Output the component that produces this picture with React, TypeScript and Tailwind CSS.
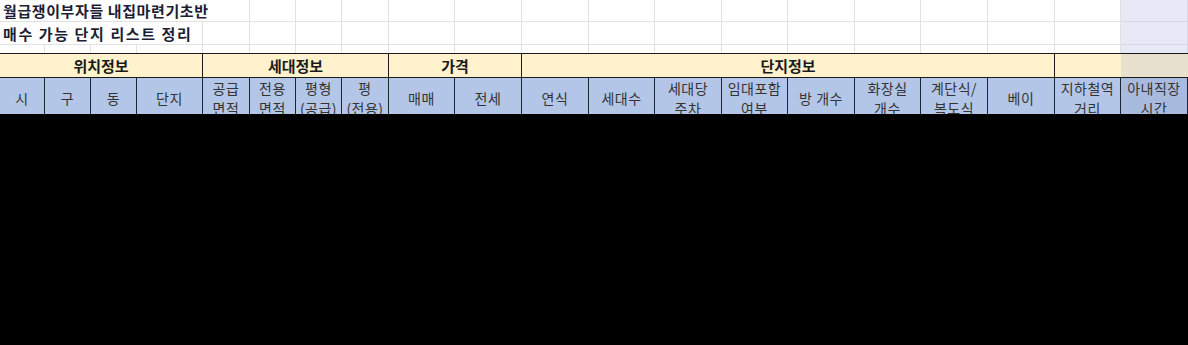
const cols = 'grid-cols-[45px_46px_46px_66px_47px_46px_46px_47px_66px_67px_67px_66px_67px_66px_67px_66px_67px_67px_66px_67px]'

const headers: string[][] = [
  ['시'], ['구'], ['동'], ['단지'],
  ['공급', '면적'], ['전용', '면적'], ['평형', '(공급)'], ['평', '(전용)'],
  ['매매'], ['전세'],
  ['연식'], ['세대수'], ['세대당', '주차'], ['임대포함', '여부'], ['방 개수'], ['화장실', '개수'], ['계단식/', '복도식'], ['베이'],
  ['지하철역', '거리'], ['아내직장', '시간'],
]

function GridRow({ h, skip = 0 }: { h: string; skip?: number }) {
  const cells = []
  for (let i = skip; i < 20; i++) {
    const last = i === 19
    cells.push(
      <div
        key={i}
        className={`${h} border-r border-b ${last ? 'bg-[#e7eaf6] border-[#d3d7e6]' : 'bg-white border-[#e1e1e1]'}`}
      />
    )
  }
  return <>{cells}</>
}

export default function App() {
  return (
    <div className="w-[1188px] h-[345px] bg-black font-['Noto_Sans_CJK_KR','Noto_Sans',sans-serif] text-[#1b1b1b]">
      <div className="h-[114px] overflow-hidden bg-white">
        <div className={`grid ${cols}`}>
          {/* row 1 - title */}
          <div className="col-span-5 h-[22px] border-r border-b border-[#e1e1e1] bg-white pl-[3px] text-[15px] font-bold leading-[22px] tracking-[0.6px] text-[#1d1d33] whitespace-nowrap">
            월급쟁이부자들 내집마련기초반
          </div>
          <GridRow h="h-[22px]" skip={5} />

          {/* row 2 - subtitle */}
          <div className="col-span-4 h-[23px] border-r border-b border-[#e1e1e1] bg-white pl-[3px] text-[15px] font-bold leading-[23px] tracking-[1.6px] text-[#1d1d33] whitespace-nowrap">
            매수 가능 단지 리스트 정리
          </div>
          <GridRow h="h-[23px]" skip={4} />

          {/* row 3 - spacer */}
          {Array.from({ length: 20 }).map((_, i) => (
            <div
              key={i}
              className={`h-[8px] border-r ${i === 19 ? 'bg-[#e7eaf6] border-[#d3d7e6]' : 'bg-white border-[#e1e1e1]'}`}
            />
          ))}

          {/* group header */}
          <div className="col-span-4 h-[25px] border-y border-r border-[#1a1a1a] bg-[#fff2cc] text-center text-[15px] font-bold leading-[23px]">위치정보</div>
          <div className="col-span-4 h-[25px] border-y border-r border-[#1a1a1a] bg-[#fff2cc] text-center text-[15px] font-bold leading-[23px]">세대정보</div>
          <div className="col-span-2 h-[25px] border-y border-r border-[#1a1a1a] bg-[#fff2cc] text-center text-[15px] font-bold leading-[23px]">가격</div>
          <div className="col-span-8 h-[25px] border-y border-r border-[#1a1a1a] bg-[#fff2cc] text-center text-[15px] font-bold leading-[23px]">단지정보</div>
          <div className="h-[25px] border-y border-[#1a1a1a] bg-[#fff2cc]" />
          <div className="h-[25px] border-y border-[#1a1a1a] bg-[#e8e1cd]" />

          {/* column headers */}
          {headers.map((lines, i) => (
            <div
              key={i}
              className={`h-[40px] border-r border-b border-[#1c2333] flex flex-col items-center justify-center text-[14px] leading-[20px] tracking-[0.5px] text-[#333] ${i === 19 ? 'bg-[#a9badf]' : 'bg-[#b4c6e7]'}`}
            >
              {lines.map((l) => (
                <span key={l} className="whitespace-nowrap">{l}</span>
              ))}
            </div>
          ))}
        </div>
      </div>
    </div>
  )
}
